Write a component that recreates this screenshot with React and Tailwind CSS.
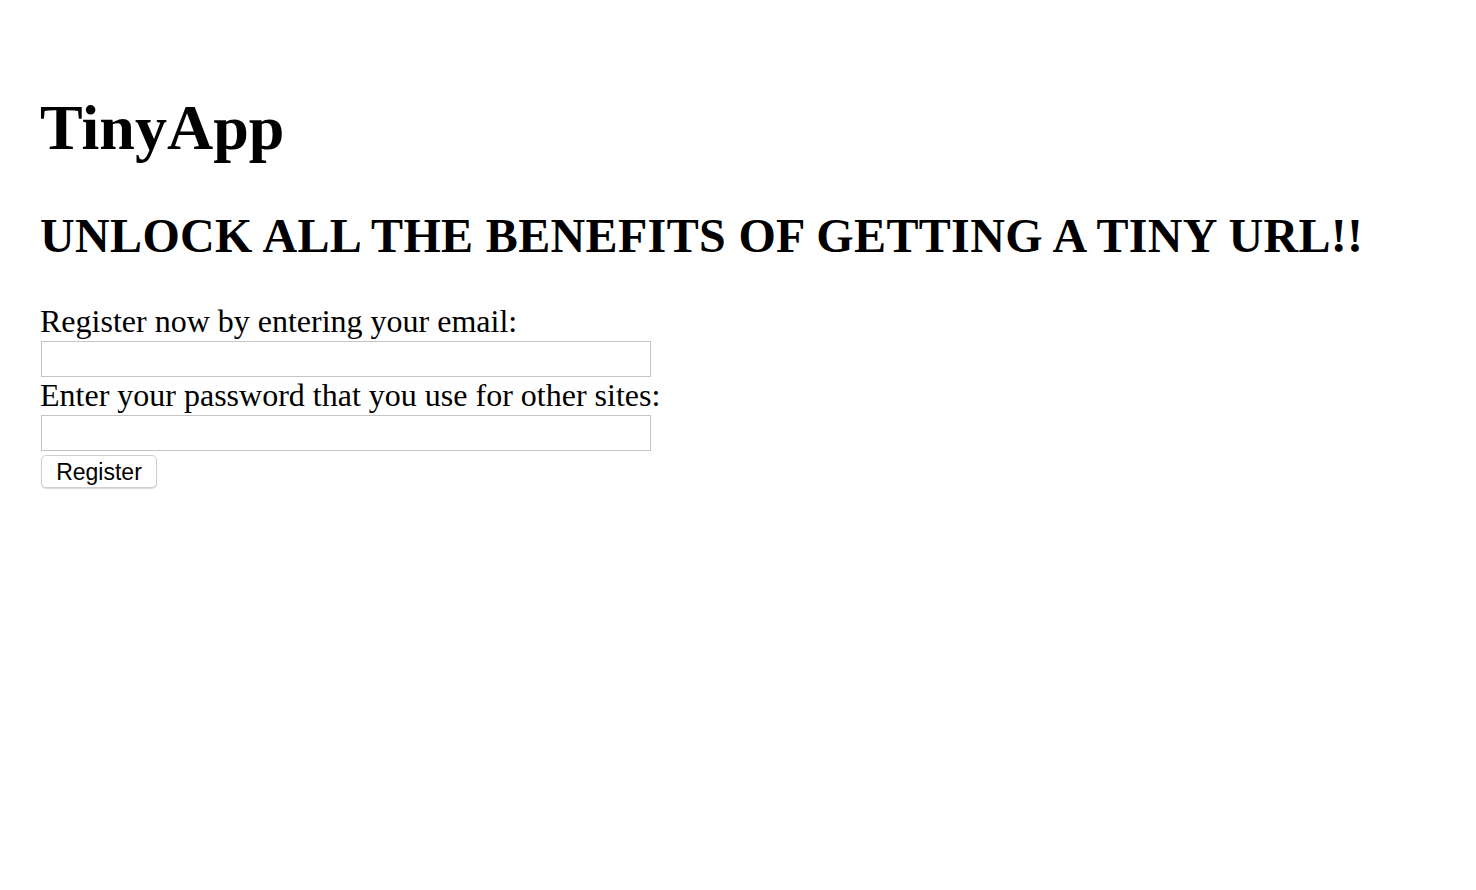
export default function App() {
  return (
    <div className="min-h-screen bg-white text-black pl-[40px] pt-[96px]" style={{ fontFamily: '"Liberation Serif", "Times New Roman", serif' }}>
      <h1 className="text-[64px] leading-[64px] font-bold">TinyApp</h1>

      <h2 className="mt-[52px] text-[48px] leading-[48px] font-bold tracking-[0.35px]">
        UNLOCK ALL THE BENEFITS OF GETTING A TINY URL!!
      </h2>

      <form className="mt-[43px] flex flex-col items-start" onSubmit={(e) => e.preventDefault()}>
        <label className="text-[32px] leading-[36px]">Register now by entering your email:</label>
        <input
          type="email"
          className="mt-[2px] ml-px w-[610px] h-[36px] border border-[#c4c4c4] bg-white outline-none"
        />
        <label className="text-[32px] leading-[36px]">Enter your password that you use for other sites:</label>
        <input
          type="password"
          className="mt-[2px] ml-px w-[610px] h-[36px] border border-[#c4c4c4] bg-white outline-none"
        />
        <button
          type="submit"
          className="mt-[4px] ml-px w-[116px] h-[33px] rounded-[5px] border border-[#cfcfcf] bg-white text-[23px] leading-none text-black pt-[2px] shadow-[0_1px_1px_rgba(0,0,0,0.15)]"
          style={{ fontFamily: '"Liberation Sans", Arial, sans-serif' }}
        >
          Register
        </button>
      </form>
    </div>
  );
}
